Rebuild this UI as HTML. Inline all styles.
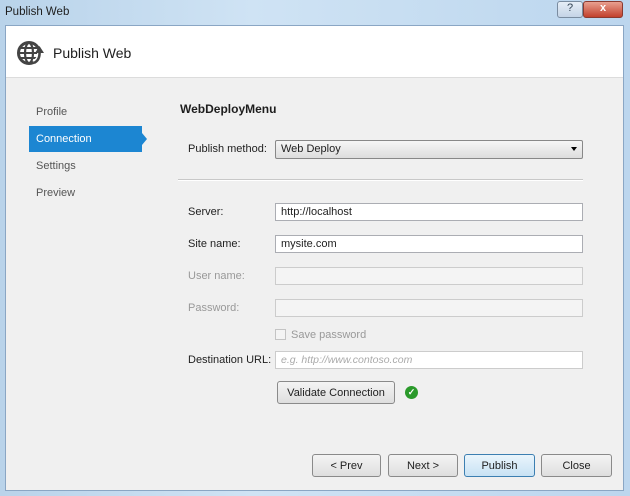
<!DOCTYPE html><html><head><style>
*{margin:0;padding:0;box-sizing:border-box}
body{width:630px;height:496px;overflow:hidden;font-family:"Liberation Sans",sans-serif;font-size:11px;color:#1e1e1e;background:linear-gradient(90deg,#b9d3ea,#cfe3f4 40%,#bcd6ee);position:relative}
.a{position:absolute}
.inp{position:absolute;left:275px;width:308px;height:18px;border:1px solid #abadb3;background:#fff;padding:2px 5px;font-size:11px}
.dis{background:#f4f4f4;border-color:#ccc}
.lbl{position:absolute;left:188px;font-size:11px}
.btn{position:absolute;height:23px;border:1px solid #8a8a8a;border-radius:3px;background:linear-gradient(#f4f4f4,#dedede);text-align:center;line-height:23px;font-size:11px}
</style></head><body>
<div class="a" style="left:5px;top:6px;font-size:11.5px">Publish Web</div>
<div class="a" style="left:557px;top:1px;width:26px;height:17px;border:1px solid #7a8ca0;border-radius:3px;background:linear-gradient(#e6eef7,#c4d4e6);text-align:center;font-size:11px;color:#345">?</div>
<div class="a" style="left:583px;top:1px;width:40px;height:17px;border:1px solid #8a3a30;border-radius:3px;background:linear-gradient(#e8a090,#c2402c);text-align:center;color:#fff;font-weight:bold;font-size:11px">x</div>
<div class="a" style="left:5px;top:25px;width:619px;height:466px;border:1px solid #8aa6c4;background:#f0f0f0"></div>
<div class="a" style="left:6px;top:26px;width:617px;height:52px;background:#fff;border-bottom:1px solid #dcdcdc"></div>
<svg class="a" style="left:16px;top:39px" width="30" height="28" viewBox="0 0 30 28"><circle cx="13" cy="14" r="10.5" fill="none" stroke="#444" stroke-width="3"/><ellipse cx="13" cy="14" rx="4" ry="10" fill="none" stroke="#444" stroke-width="2.2"/><path d="M3 14H23M5 9H21M5 19H21" stroke="#444" stroke-width="2"/><path d="M18 24Q25 21 24 12" stroke="#fff" stroke-width="6" fill="none"/><path d="M18 24Q24 21 23.5 13" stroke="#444" stroke-width="2.6" fill="none"/><path d="M19 14L23.5 7L28 14Z" fill="#444"/></svg>
<div class="a" style="left:53px;top:45px;font-size:14px">Publish Web</div>
<div class="a" style="left:36px;top:106px;color:#555">Profile</div>
<div class="a" style="left:29px;top:126px;width:113px;height:26px;background:#1c86d2"></div>
<div class="a" style="left:142px;top:133px;border-left:5px solid #1c86d2;border-top:6px solid transparent;border-bottom:6px solid transparent"></div>
<div class="a" style="left:36px;top:133px;color:#fff">Connection</div>
<div class="a" style="left:36px;top:160px;color:#555">Settings</div>
<div class="a" style="left:36px;top:187px;color:#555">Preview</div>
<div class="a" style="left:180px;top:102px;font-weight:bold;font-size:12px">WebDeployMenu</div>
<div class="lbl" style="top:143px">Publish method:</div>
<div class="a" style="left:275px;top:140px;width:308px;height:19px;border:1px solid #888;border-radius:2px;background:linear-gradient(#f6f6f6,#dddddd);padding:2px 5px">Web Deploy<span style="position:absolute;right:5px;top:6px;border-top:4px solid #000;border-left:3px solid transparent;border-right:3px solid transparent"></span></div>
<div class="a" style="left:178px;top:179px;width:405px;height:2px;background:#c8c8c8;border-bottom:1px solid #fff"></div>
<div class="lbl" style="top:206px">Server:</div><div class="inp" style="top:203px">http://localhost</div>
<div class="lbl" style="top:238px">Site name:</div><div class="inp" style="top:235px">mysite.com</div>
<div class="lbl" style="top:270px;color:#999">User name:</div><div class="inp dis" style="top:267px"></div>
<div class="lbl" style="top:302px;color:#999">Password:</div><div class="inp dis" style="top:299px"></div>
<div class="a" style="left:275px;top:329px;width:11px;height:11px;border:1px solid #c4c4c4;background:#f4f4f4"></div>
<div class="a" style="left:291px;top:329px;color:#999">Save password</div>
<div class="lbl" style="top:354px">Destination URL:</div><div class="inp" style="top:351px;color:#aaa;font-style:italic;font-size:10.5px;border-color:#ccc">e.g. http://www.contoso.com</div>
<div class="btn" style="left:277px;top:381px;width:118px">Validate Connection</div>
<div class="a" style="left:405px;top:386px;width:13px;height:13px;border-radius:50%;background:#2b9a2b;color:#fff;font-size:9px;text-align:center;line-height:13px;font-weight:bold">✓</div>
<div class="btn" style="left:312px;top:454px;width:69px">&lt; Prev</div>
<div class="btn" style="left:388px;top:454px;width:70px">Next &gt;</div>
<div class="btn" style="left:464px;top:454px;width:71px;border-color:#3c7fb1;background:linear-gradient(#eaf5fc,#c8e2f4)">Publish</div>
<div class="btn" style="left:541px;top:454px;width:71px">Close</div>
</body></html>
